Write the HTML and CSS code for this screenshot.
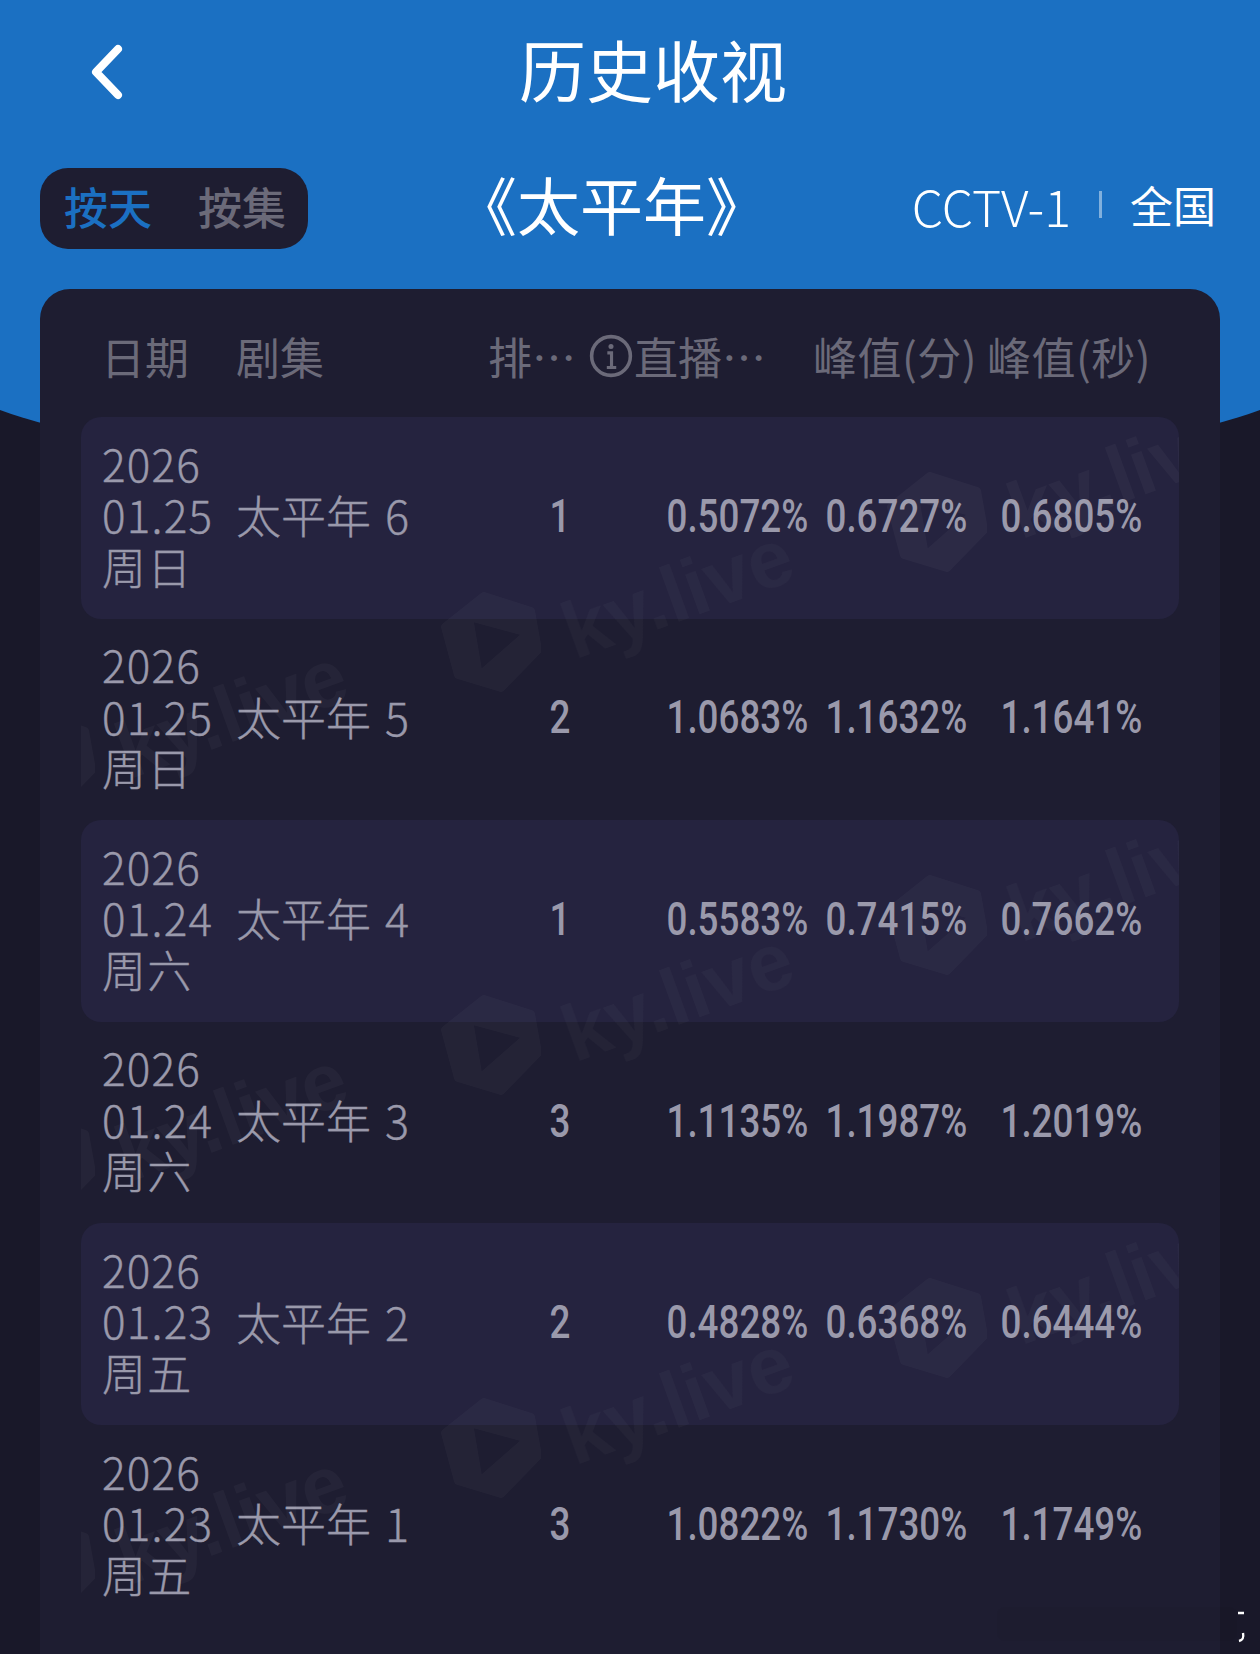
FILE: index.html
```html
<!DOCTYPE html>
<html lang="zh-CN">
<head>
  <meta charset="UTF-8">
  <meta name="viewport" content="width=device-width, initial-scale=1.0">
  <title>历史收视</title>
  <link rel="stylesheet" href="styles.css">
</head>
<body>
  <div class="page">
    <div class="band"></div>

    <!-- 顶部标题 -->
    <header class="topbar">
      <svg class="back" viewBox="0 0 32 56" aria-label="返回">
        <path d="M27 5 L5 28 L27 51" fill="none" stroke="#fff" stroke-width="8" stroke-linecap="round" stroke-linejoin="round"/>
      </svg>
      <h1 class="title">历史收视</h1>
    </header>

    <div class="filters">
      <div class="toggle">
        <span class="toggle-item active">按天</span>
        <span class="toggle-item">按集</span>
      </div>
      <div class="drama">《太平年》</div>
      <div class="channel">
        <span class="channel-name">CCTV-1</span>
        <i class="divider"></i>
        <span class="channel-area">全国</span>
      </div>
    </div>

    <!-- 收视表格 -->
    <section class="card">
      <div class="thead">
        <span>日期</span>
        <span>剧集</span>
        <span>排…</span>
        <span class="live-head">
          <svg class="info" viewBox="0 0 42 42">
            <circle cx="21" cy="21" r="18.5" fill="none" stroke="#6b6a79" stroke-width="3.4"/>
            <circle cx="21" cy="12" r="2.4" fill="#6b6a79"/>
            <path d="M17.5 18h4v14M17 32h9" fill="none" stroke="#6b6a79" stroke-width="3"/>
          </svg>直播…</span>
        <span>峰值(分)</span>
        <span>峰值(秒)</span>
      </div>

      <div class="rows">
        <div class="row">
          <div class="date">2026<br>01.25<br>周日</div>
          <div class="name">太平年 6</div>
          <div class="num rank">1</div>
          <div class="num">0.5072%</div>
          <div class="num">0.6727%</div>
          <div class="num">0.6805%</div>
        </div>
        <div class="row">
          <div class="date">2026<br>01.25<br>周日</div>
          <div class="name">太平年 5</div>
          <div class="num rank">2</div>
          <div class="num">1.0683%</div>
          <div class="num">1.1632%</div>
          <div class="num">1.1641%</div>
        </div>
        <div class="row">
          <div class="date">2026<br>01.24<br>周六</div>
          <div class="name">太平年 4</div>
          <div class="num rank">1</div>
          <div class="num">0.5583%</div>
          <div class="num">0.7415%</div>
          <div class="num">0.7662%</div>
        </div>
        <div class="row">
          <div class="date">2026<br>01.24<br>周六</div>
          <div class="name">太平年 3</div>
          <div class="num rank">3</div>
          <div class="num">1.1135%</div>
          <div class="num">1.1987%</div>
          <div class="num">1.2019%</div>
        </div>
        <div class="row">
          <div class="date">2026<br>01.23<br>周五</div>
          <div class="name">太平年 2</div>
          <div class="num rank">2</div>
          <div class="num">0.4828%</div>
          <div class="num">0.6368%</div>
          <div class="num">0.6444%</div>
        </div>
        <div class="row">
          <div class="date">2026<br>01.23<br>周五</div>
          <div class="name">太平年 1</div>
          <div class="num rank">3</div>
          <div class="num">1.0822%</div>
          <div class="num">1.1730%</div>
          <div class="num">1.1749%</div>
        </div>

        <!-- 水印 -->
        <div class="marks">
          <div class="mark m1"><svg viewBox="0 0 100 100"><use href="#ky-logo"/></svg><span>ky.live</span></div>
          <div class="mark m2"><svg viewBox="0 0 100 100"><use href="#ky-logo"/></svg><span>ky.live</span></div>
          <div class="mark m3"><svg viewBox="0 0 100 100"><use href="#ky-logo"/></svg><span>ky.live</span></div>
          <div class="mark m4"><svg viewBox="0 0 100 100"><use href="#ky-logo"/></svg><span>ky.live</span></div>
          <div class="mark m5"><svg viewBox="0 0 100 100"><use href="#ky-logo"/></svg><span>ky.live</span></div>
          <div class="mark m6"><svg viewBox="0 0 100 100"><use href="#ky-logo"/></svg><span>ky.live</span></div>
          <div class="mark m7"><svg viewBox="0 0 100 100"><use href="#ky-logo"/></svg><span>ky.live</span></div>
          <div class="mark m8"><svg viewBox="0 0 100 100"><use href="#ky-logo"/></svg><span>ky.live</span></div>
          <div class="mark m9"><svg viewBox="0 0 100 100"><use href="#ky-logo"/></svg><span>ky.live</span></div>
        </div>
      </div>
    </section>

    <svg class="corner" viewBox="0 0 260 50">
      <rect x="5" y="8" width="240" height="34" rx="8" fill="#000" opacity="0.03"/>
      <path d="M246 14h6M251 34c1 5 0 7-4 8" fill="none" stroke="#fff" stroke-width="2.4"/>
    </svg>

    <svg class="defs" width="0" height="0">
      <symbol id="ky-logo" viewBox="0 0 100 100">
        <path d="M4 35 L43 4 L90 19 L97 58 L60 96 L17 83 Z M28 25 L38 84 L87 41 Z" fill="#fff" stroke="#fff" stroke-width="8" stroke-linejoin="round" fill-rule="evenodd"/>
      </symbol>
    </svg>
  </div>
</body>
</html>
```

FILE: styles.css
```css
html, body {
  margin: 0;
  padding: 0;
  background-color: #191829;
}

.page {
  position: relative;
  width: 1260px;
  height: 1654px;
  overflow: hidden;
  font-family: "Noto Sans CJK SC", "Noto Sans", sans-serif;
}

/* blue band with the curved bottom edge */
.band {
  position: absolute;
  left: -60px;
  right: -60px;
  top: 0;
  height: 478px;
  background-color: #1b70c2;
  border-radius: 0 0 50% 50% / 0 0 115px 115px;
}

.topbar {
  position: relative;
  height: 144px;
  box-sizing: border-box;
  padding: 0 0 10px 46px;
  display: flex;
  justify-content: center;
  align-items: center;
}

.back {
  position: absolute;
  left: 91px;
  top: 44px;
  width: 32px;
  height: 56px;
}

.title {
  margin: 0;
  font-size: 67px;
  font-weight: 400;
  line-height: 1;
  color: #fff;
}

.filters {
  position: relative;
  display: flex;
  align-items: center;
  height: 81px;
  margin-top: 24px;
  padding: 0 40px;
}

.toggle {
  width: 268px;
  height: 81px;
  box-sizing: border-box;
  padding: 0 0 5px 24px;
  display: flex;
  align-items: center;
  gap: 46px;
  background-color: #1e1d31;
  border-radius: 28px;
}

.toggle-item {
  font-size: 44px;
  font-weight: 500;
  line-height: 1;
  color: #6b6a79;
}

.toggle-item.active {
  color: #1b70c2;
}

.drama {
  margin-left: 146px;
  padding-bottom: 12px;
  width: 320px;
  font-size: 63px;
  line-height: 1;
  color: #fff;
}

.channel {
  margin-left: auto;
  margin-right: 4px;
  padding-bottom: 8px;
  display: flex;
  align-items: center;
  color: #fff;
}

.channel-name {
  font-size: 50px;
  font-weight: 300;
  line-height: 1;
}

.channel-area {
  font-size: 43px;
  line-height: 1;
}

.divider {
  width: 3px;
  height: 27px;
  margin: 0 28px;
  background-color: rgba(255, 255, 255, 0.45);
}

.card {
  position: relative;
  margin: 40px 40px 0;
  height: 1400px;
  box-sizing: border-box;
  padding: 0 41px;
  background-color: #1e1d31;
  border-radius: 30px 30px 0 0;
}

.thead {
  height: 128px;
  box-sizing: border-box;
  padding: 6px 0 0 20px;
  display: grid;
  grid-template-columns: 135px 252px 101px 224px 174px 1fr;
  align-items: center;
  font-size: 44px;
  line-height: 1;
  color: #6b6a79;
  white-space: nowrap;
}

.thead span:nth-child(n+5) {
  letter-spacing: 0.5px;
}

.live-head {
  display: flex;
  align-items: center;
  gap: 1px;
}

.info {
  width: 44px;
  height: 44px;
}

.rows {
  position: relative;
  overflow: hidden;
}

.row {
  height: 201.6px;
  box-sizing: border-box;
  padding: 0 37px 0 21px;
  display: grid;
  grid-template-columns: 134px 224px 200px 148px 159px 175px;
  align-items: center;
  color: #9a99ab;
  border-radius: 20px;
}

.row:nth-child(odd) {
  background-color: #25233f;
}

.date {
  padding-bottom: 6px;
  font-size: 44px;
  font-weight: 300;
  line-height: 51.5px;
  letter-spacing: 1.2px;
  white-space: nowrap;
  -webkit-text-stroke: 0.4px #9a99ab;
}

.name {
  padding-bottom: 6px;
  font-size: 45px;
  font-weight: 300;
  line-height: 1;
  word-spacing: 4px;
  white-space: nowrap;
  -webkit-text-stroke: 0.4px #9a99ab;
}

/* no condensed DIN here, so Roboto is squeezed to the same width */
.num {
  justify-self: end;
  padding-bottom: 4px;
  font-family: "Roboto", sans-serif;
  font-size: 46px;
  font-weight: 500;
  line-height: 1;
  white-space: nowrap;
  transform-origin: 100% 50%;
  transform: scaleX(0.8);
}

.rank {
  justify-self: center;
  transform-origin: 50% 50%;
}

/* watermark layer */
.marks {
  position: absolute;
  inset: 0;
  pointer-events: none;
}

.mark {
  position: absolute;
  width: 100px;
  height: 100px;
  opacity: 0.03;
}

.mark svg {
  display: block;
  width: 100px;
  height: 100px;
}

.mark span {
  position: absolute;
  left: 138px;
  top: 0;
  font-family: "Liberation Sans", sans-serif;
  font-size: 80px;
  font-weight: 700;
  line-height: 1;
  color: #fff;
  white-space: nowrap;
  transform-origin: 0 100%;
  transform: rotate(-20deg);
}

.m1 { left: 360px; top: 175px; }
.m2 { left: 360px; top: 578px; }
.m3 { left: 360px; top: 981px; }
.m4 { left: 806px; top: 55px; }
.m5 { left: 806px; top: 458px; }
.m6 { left: 806px; top: 861px; }
.m7 { left: -86px; top: 295px; }
.m8 { left: -86px; top: 698px; }
.m9 { left: -86px; top: 1101px; }

.corner {
  position: absolute;
  left: 992px;
  top: 1599px;
  width: 260px;
  height: 50px;
}

.defs {
  position: absolute;
}
```
